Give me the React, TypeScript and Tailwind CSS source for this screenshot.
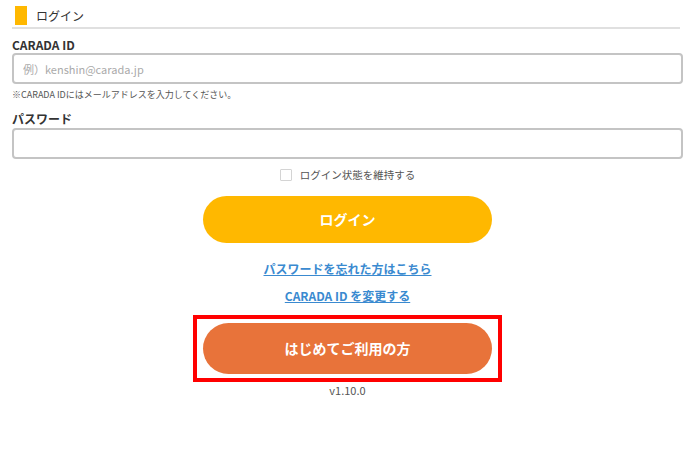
import { useState } from 'react';

const font = { fontFamily: '"Noto Sans CJK JP", "Noto Sans", sans-serif' };

export default function App() {
  const [keep, setKeep] = useState(false);
  const [id, setId] = useState('');
  const [pw, setPw] = useState('');

  return (
    <div className="w-[690px] h-[450px] bg-white text-[#333] pl-[12px] pr-[7px]" style={font}>
      {/* section header */}
      <div className="flex items-center h-[29px] pt-[4px] pl-[3px] border-b-2 border-[#e0e0e0] mr-[3px]">
        <div className="w-[12px] h-[19px] bg-[#ffb800]" />
        <span className="ml-[9px] text-[12px] text-[#333]">ログイン</span>
      </div>

      <div className="mt-[8px] text-[12px] font-bold leading-[16px]">CARADA ID</div>
      <input
        value={id}
        onChange={(e) => setId(e.target.value)}
        placeholder="例）kenshin@carada.jp"
        className="mt-[0px] block w-full h-[31px] border-2 border-[#c4c4c4] rounded-[4px] px-[9px] text-[11px] placeholder-[#aaa] outline-none"
      />
      <p className="mt-[5px] text-[9px] text-[#555] leading-[12px]">※CARADA IDにはメールアドレスを入力してください。</p>

      <div className="mt-[10px] text-[12px] font-bold leading-[16px]">パスワード</div>
      <input
        type="password"
        value={pw}
        onChange={(e) => setPw(e.target.value)}
        className="mt-[1px] block w-full h-[31px] border-2 border-[#c4c4c4] rounded-[4px] px-[9px] text-[12px] outline-none"
      />

      <div className="flex flex-col items-center">
        <label className="mt-[8px] flex items-center gap-[8px] text-[10.5px] text-[#555] cursor-pointer leading-[16px]">
          <input
            type="checkbox"
            checked={keep}
            onChange={(e) => setKeep(e.target.checked)}
            className="w-[12px] h-[12px] appearance-none border border-[#d4d4d4] rounded-[1px] checked:bg-[#ffb800]"
          />
          ログイン状態を維持する
        </label>

        <button className="mt-[13px] w-[289px] h-[47px] rounded-full bg-[#ffb800] text-white text-[14px] font-bold">
          ログイン
        </button>

        <a href="#" className="mt-[17px] text-[12px] font-bold text-[#3a8ad0] underline leading-[18px]">
          パスワードを忘れた方はこちら
        </a>
        <a href="#" className="mt-[9px] text-[12px] font-bold text-[#3a8ad0] underline leading-[18px]">
          CARADA ID を変更する
        </a>

        {/* highlighted new-user button */}
        <div className="mt-[10px] border-4 border-[#ff0000] px-[6px] py-[4px]">
          <button className="w-[289px] h-[51px] rounded-full bg-[#e8733a] text-white text-[14px] font-bold">
            はじめてご利用の方
          </button>
        </div>

        <div className="mt-[0px] text-[11px] text-[#555] leading-[16px]">v1.10.0</div>
      </div>
    </div>
  );
}
